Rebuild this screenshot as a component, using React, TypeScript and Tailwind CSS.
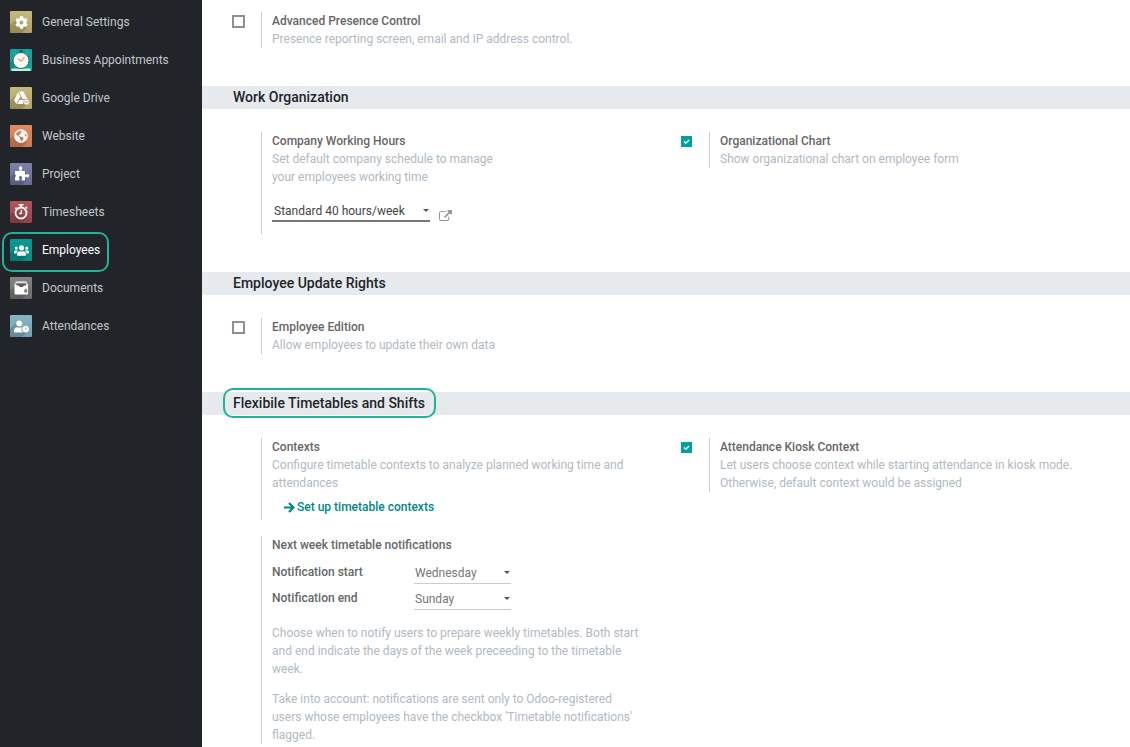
import React, { useState } from "react";
import { FaCog, FaGlobeAmericas, FaUserClock, FaUsers } from "react-icons/fa";

type MenuItem = {
  name: string;
  tile: string;
  icon: React.ReactNode;
};

const ClockIcon = () => (
  <svg viewBox="0 0 22 22" className="size-[22px]">
    <path d="M0 4h22M0 9h22M5 0v22M17 0v22" stroke="#3fb5ad" strokeWidth="0.5" />
    <path d="M9.500 1.500h3v2.500h-3z" fill="#17464a" />
    <path d="M1.500 22v-2.500h19V22z" fill="#bfeeea" />
    <circle cx="11" cy="11.500" r="8" fill="#f7f7f5" stroke="#2b6e70" strokeWidth="1" />
    <path d="M8 9.500l3 2.800L14.500 8" fill="none" stroke="#f0a65a" strokeWidth="1.200" />
  </svg>
);

const DriveIcon = () => (
  <svg viewBox="0 0 22 22" className="size-[22px]">
    <path d="M8.700 4.500h4.600l4.200 7.500h-4.600z" fill="#fff" />
    <path d="M8 5.300l2.300 4.200-4 7.500L4 13z" fill="#fff" />
    <path d="M9.300 13h5.700l-2 4H7.200z" fill="#fff" />
    <circle cx="16.500" cy="15" r="3.200" fill="#b5a76c" />
    <circle cx="16.500" cy="15" r="1.700" fill="none" stroke="#fff" strokeWidth="1.200" />
    <circle cx="16.500" cy="15" r="2.500" fill="none" stroke="#fff" strokeWidth="0.800" strokeDasharray="1 0.960" />
  </svg>
);

const PuzzleIcon = () => (
  <svg viewBox="0 0 22 22" className="size-[22px]" fill="#fff">
    <path d="M5 8h4.600V6.500a1.700 1.700 0 1 1 2 0V8H15v3.700h1.300a1.600 1.600 0 1 1 0 2H15V17.500h-3.300V15.500a1.500 1.500 0 1 0-2.200 0v2H5v-3.800h.8v-2H5z" />
  </svg>
);

const StopwatchIcon = () => (
  <svg viewBox="0 0 22 22" className="size-[22px]" fill="none" stroke="#fff">
    <circle cx="11" cy="12" r="5.500" strokeWidth="1.800" />
    <path d="M8.500 3.800h5" strokeWidth="1.600" />
    <path d="M11 4v2.500" strokeWidth="1.800" />
    <path d="M15.500 5.800l1.700 1.700M6.500 6.500L5.300 7.700" strokeWidth="1.400" />
    <path d="M11.300 9v3.500H9" strokeWidth="1.300" />
  </svg>
);

const DocumentsIcon = () => (
  <svg viewBox="0 0 22 22" className="size-[22px]">
    <path d="M6 4.500h10l2 3v9a1 1 0 0 1-1 1H5.500a1 1 0 0 1-1-1v-9z" fill="#fff" />
    <path d="M6 5.800h10l1 1.700H5z" fill="#8a8a8a" />
    <path d="M6.500 7h9.500v1.500h-2l-1.200 1.500h-3L8.500 8.500h-2z" fill="#5f5f5f" />
    <path d="M14.500 13h2.500v2.200h-2.500zM15 13v-1h1.500v1" fill="#888" stroke="#888" strokeWidth="0.700" />
  </svg>
);

const menuItems: MenuItem[] = [
  { name: "General Settings", tile: "from-[#c6b97c] to-[#b0a269]", icon: <FaCog size={13} /> },
  { name: "Business Appointments", tile: "from-[#12a097] to-[#12a097]", icon: <ClockIcon /> },
  { name: "Google Drive", tile: "from-[#c6b97c] to-[#b0a269]", icon: <DriveIcon /> },
  { name: "Website", tile: "from-[#e08a61] to-[#cf7a53]", icon: <FaGlobeAmericas size={14} /> },
  { name: "Project", tile: "from-[#7d80a8] to-[#696c93]", icon: <PuzzleIcon /> },
  { name: "Timesheets", tile: "from-[#b3545b] to-[#96434a]", icon: <StopwatchIcon /> },
  { name: "Employees", tile: "from-[#0a9a94] to-[#088c87]", icon: <FaUsers size={15} /> },
  { name: "Documents", tile: "from-[#858585] to-[#6b6b6b]", icon: <DocumentsIcon /> },
  { name: "Attendances", tile: "from-[#8ab4c6] to-[#73a0b4]", icon: <FaUserClock size={15} /> },
];

const Sidebar = () => {
  const [active, setActive] = useState("Employees");

  return (
    <nav className="w-[202px] shrink-0 bg-[#212529] pt-[3px]">
      {menuItems.map((item) => (
        <button
          key={item.name}
          type="button"
          onClick={() => setActive(item.name)}
          className={`relative flex h-[38px] w-full items-center gap-[10px] pl-[10px] text-left ${
            item.name === active ? "text-white" : "text-[#c3c6c9]"
          }`}
        >
          <span
            className={`relative flex size-[22px] items-center justify-center overflow-hidden rounded-[1px] bg-linear-to-b text-white ${item.tile}`}
          >
            <svg viewBox="0 0 22 22" className="absolute inset-0 size-[22px]">
              <path d="M6 8L0 14v8h12l5-5z" fill="#000" opacity="0.14" />
            </svg>
            <span className="relative">{item.icon}</span>
          </span>
          <span>{item.name}</span>
          {item.name === "Employees" && (
            <span className="absolute top-px left-[2px] h-10 w-[107px] rounded-[10px] border-2 border-[#20b29a]" />
          )}
        </button>
      ))}
    </nav>
  );
};

const SectionTitle = ({ children, marked }: { children: React.ReactNode; marked?: boolean }) => (
  <h2 className="mt-[38px] mb-[23px] bg-[#e7eaed] pl-[31px] text-sm leading-[23px] font-medium text-[#212529]">
    <span className="relative inline-block">
      {children}
      {marked && (
        <span className="absolute -top-1 -right-[11px] -bottom-[3px] -left-[10px] rounded-[10px] border-2 border-[#20b29a]" />
      )}
    </span>
  </h2>
);

type SettingProps = {
  id: string;
  title: string;
  checkbox?: boolean;
  defaultChecked?: boolean;
  children: React.ReactNode;
};

const Setting = ({ id, title, checkbox, defaultChecked, children }: SettingProps) => (
  <div className="flex items-start">
    <div className="flex w-[43px] shrink-0 pt-[3px] pl-[14px]">
      {checkbox && (
        <span className="relative flex size-[13px] items-center justify-center">
          <input
            id={id}
            type="checkbox"
            defaultChecked={defaultChecked}
            className="peer size-[13px] appearance-none border-2 border-[#8b9196] bg-white checked:size-[11px] checked:border-0 checked:bg-[#00a09d]"
          />
          <svg viewBox="0 0 11 11" className="pointer-events-none absolute hidden size-[11px] peer-checked:block">
            <path d="M3 5.500l1.800 1.600L8.200 4" fill="none" stroke="#fff" strokeWidth="1.400" />
          </svg>
        </span>
      )}
    </div>
    <div className="min-w-0 flex-1 border-l border-[#c9ccd0] pr-6 pl-[10px] text-[#b1b9c1]">
      {checkbox ? (
        <label htmlFor={id} className="block font-medium text-[#666]">{title}</label>
      ) : (
        <h3 className="font-medium text-[#666]">{title}</h3>
      )}
      {children}
    </div>
  </div>
);

const Caret = () => (
  <svg viewBox="0 0 8 4" className="pointer-events-none absolute right-0 bottom-[9px] h-1 w-2">
    <path d="M1 0h6L4 3z" fill="#555" />
  </svg>
);

const days = ["Monday", "Tuesday", "Wednesday", "Thursday", "Friday", "Saturday", "Sunday"];

const DaySelect = ({ id, label, value }: { id: string; label: string; value: string }) => (
  <div className="flex h-[26px] items-start pt-[3px]">
    <label htmlFor={id} className="w-[142px] font-medium text-[#666]">{label}</label>
    <div className="relative w-[97px]">
      <select
        id={id}
        defaultValue={value}
        className="block h-[21px] w-full appearance-none border-b border-[#c9ccd0] pl-px text-[#777]"
      >
        {days.map((day) => (
          <option key={day}>{day}</option>
        ))}
      </select>
      <Caret />
    </div>
  </div>
);

const App = () => {
  return (
    <div className="flex min-h-screen bg-white font-[Roboto,sans-serif] text-xs leading-[18px]">
      <Sidebar />
      <main className="min-w-0 flex-1">
        <div className="grid grid-cols-2 px-4 pt-3">
          <Setting id="presence" title="Advanced Presence Control" checkbox>
            <p>Presence reporting screen, email and IP address control.</p>
          </Setting>
        </div>

        <SectionTitle>Work Organization</SectionTitle>
        <div className="grid grid-cols-2 px-4">
          <Setting id="hours" title="Company Working Hours">
            <p>
              Set default company schedule to manage
              <br />
              your employees working time
            </p>
            <div className="flex items-end gap-[9px] pt-4 pb-3">
              <div className="relative w-[158px]">
                <select
                  aria-label="Company Working Hours"
                  className="block h-5 w-full appearance-none border-b-2 border-[#777] pl-[2px] text-[#444]"
                >
                  <option>Standard 40 hours/week</option>
                </select>
                <Caret />
              </div>
              <button type="button" aria-label="External link" className="pb-px text-[#8b9196]">
                <svg viewBox="0 0 1792 1536" className="block h-[11px] w-[13px]" fill="currentColor">
                  <path d="M1408 928v320q0 119-84.500 203.500T1120 1536H288q-119 0-203.500-84.500T0 1248V416q0-119 84.500-203.500T288 128h704q14 0 23 9t9 23v64q0 14-9 23t-23 9H288q-66 0-113 47t-47 113v832q0 66 47 113t113 47h832q66 0 113-47t47-113V928q0-14 9-23t23-9h64q14 0 23 9t9 23zm384-864v512q0 26-19 45t-45 19-45-19l-176-176-652 652q-10 10-23 10t-23-10L695 983q-10-10-10-23t10-23l652-652-176-176q-19-19-19-45t19-45 45-19h512q26 0 45 19t19 45z" />
                </svg>
              </button>
            </div>
          </Setting>
          <Setting id="chart" title="Organizational Chart" checkbox defaultChecked>
            <p>Show organizational chart on employee form</p>
          </Setting>
        </div>

        <SectionTitle>Employee Update Rights</SectionTitle>
        <div className="grid grid-cols-2 px-4">
          <Setting id="edition" title="Employee Edition" checkbox>
            <p>Allow employees to update their own data</p>
          </Setting>
        </div>

        <SectionTitle marked>Flexibile Timetables and Shifts</SectionTitle>
        <div className="grid grid-cols-2 gap-y-4 px-4">
          <Setting id="contexts" title="Contexts">
            <p>Configure timetable contexts to analyze planned working time and attendances</p>
            <a href="#contexts" className="flex items-center gap-[2px] pt-[6px] pb-1 pl-3 font-medium text-[#008784]">
              <svg viewBox="0 0 11 11" className="size-[11px]">
                <path d="M0 5.500h9M5 1l4.500 4.500L5 10" fill="none" stroke="currentColor" strokeWidth="2.200" />
              </svg>
              Set up timetable contexts
            </a>
          </Setting>
          <Setting id="kiosk" title="Attendance Kiosk Context" checkbox defaultChecked>
            <p>Let users choose context while starting attendance in kiosk mode. Otherwise, default context would be assigned</p>
          </Setting>
          <Setting id="notifications" title="Next week timetable notifications">
            <div className="pt-[6px] pb-3">
              <DaySelect id="start" label="Notification start" value="Wednesday" />
              <DaySelect id="end" label="Notification end" value="Sunday" />
            </div>
            <p>
              Choose when to notify users to prepare weekly timetables. Both start and end indicate the days of the
              week preceeding to the timetable week.
            </p>
            <p className="pt-3">
              Take into account: notifications are sent only to Odoo-registered users whose employees have the checkbox
              'Timetable notifications' flagged.
            </p>
          </Setting>
        </div>
      </main>
    </div>
  );
};

export default App;
